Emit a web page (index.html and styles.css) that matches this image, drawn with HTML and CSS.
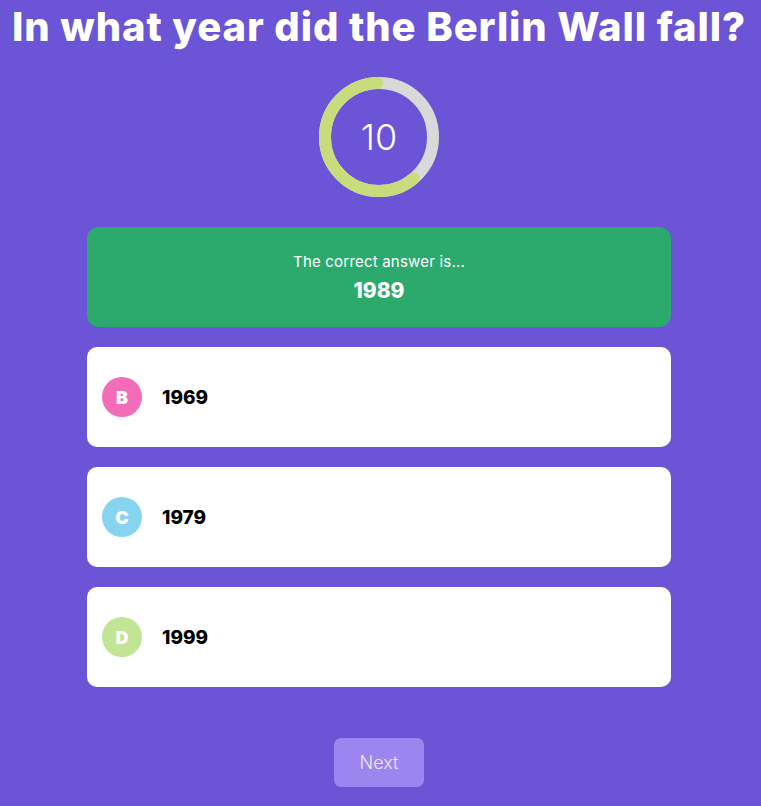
FILE: index.html
```html
<!DOCTYPE html>
<html lang="en">
<head>
<meta charset="utf-8">
<title>Quiz</title>
<link rel="stylesheet" href="styles.css">
</head>
<body>
<main class="quiz">
  <h1 class="question">In what year did the Berlin Wall fall?</h1>
  <div class="timer">
    <svg class="timer-ring" width="120" height="120" viewBox="0 0 120 120">
      <circle cx="60" cy="60" r="54" fill="none" stroke="#d9d9d9" stroke-width="12"/>
      <circle cx="60" cy="60" r="54" fill="none" stroke="#c9dc7c" stroke-width="12" stroke-linecap="round" stroke-dasharray="205 339.3" stroke-dashoffset="-132" transform="rotate(-90 60 60)"/>
    </svg>
    <span class="timer-value">10</span>
  </div>
  <div class="answers">
    <div class="result">
      <p class="result-label">The correct answer is...</p>
      <p class="result-value">1989</p>
    </div>
    <div class="option">
      <span class="badge badge-b">B</span>
      <span class="option-text">1969</span>
    </div>
    <div class="option">
      <span class="badge badge-c">C</span>
      <span class="option-text">1979</span>
    </div>
    <div class="option">
      <span class="badge badge-d">D</span>
      <span class="option-text">1999</span>
    </div>
  </div>
  <button class="next">Next</button>
</main>
</body>
</html>
```

FILE: styles.css
```css
html, body {
  margin: 0;
  padding: 0;
}
body {
  background: #6b54d6;
  font-family: "Inter", "Open Sans", sans-serif;
  color: #fff;
}
.quiz {
  width: 758px;
  display: flex;
  flex-direction: column;
  align-items: center;
}
.question {
  margin: 0;
  padding-top: 3px;
  font-size: 40px;
  line-height: 48px;
  font-weight: 800;
  letter-spacing: 0.9px;
  white-space: nowrap;
  text-align: center;
}
.timer {
  position: relative;
  width: 120px;
  height: 120px;
  margin-top: 26px;
}
.timer-ring {
  display: block;
}
.timer-value {
  position: absolute;
  inset: 0;
  display: flex;
  align-items: center;
  justify-content: center;
  font-size: 36px;
  font-weight: 300;
}
.answers {
  width: 584px;
  margin-top: 30px;
  display: flex;
  flex-direction: column;
  gap: 20px;
}
.result {
  height: 100px;
  background: #2caa6e;
  border-radius: 12px;
  display: flex;
  flex-direction: column;
  align-items: center;
  justify-content: center;
}
.result-label {
  margin: 0;
  font-size: 15px;
  font-weight: 400;
  line-height: 22px;
  letter-spacing: 0.2px;
}
.result-value {
  margin: 5px 0 0;
  font-size: 21px;
  font-weight: 800;
  line-height: 26px;
}
.option {
  height: 100px;
  background: #fff;
  border-radius: 10px;
  display: flex;
  align-items: center;
  padding-left: 15px;
  gap: 20px;
  color: #000;
}
.badge {
  width: 40px;
  height: 40px;
  border-radius: 50%;
  display: flex;
  align-items: center;
  justify-content: center;
  color: #fff;
  font-size: 18px;
  font-weight: 900;
}
.badge-b { background: #f46bb8; }
.badge-c { background: #87d4ef; }
.badge-d { background: #c1e497; }
.option-text {
  font-size: 19px;
  font-weight: 800;
}
.next {
  margin-top: 51px;
  width: 90px;
  height: 49px;
  border: none;
  border-radius: 7px;
  background: #9a86ee;
  color: #ece8fd;
  font-family: inherit;
  font-size: 18px;
  font-weight: 300;
}
```
